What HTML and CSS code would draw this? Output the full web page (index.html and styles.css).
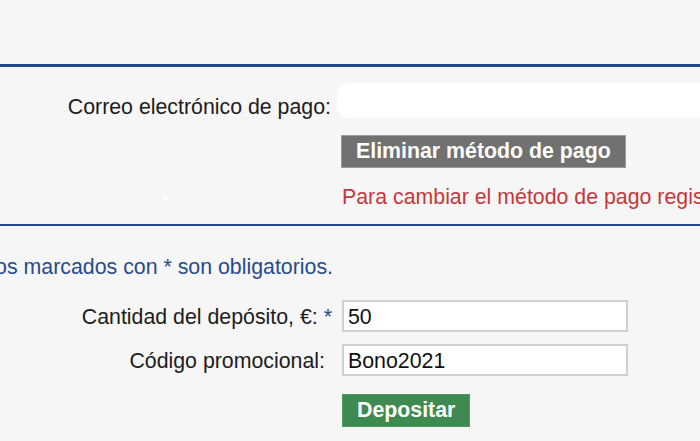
FILE: index.html
```html
<!DOCTYPE html>
<html lang="es">
<head>
<meta charset="utf-8">
<title>Depósito</title>
<link rel="stylesheet" href="styles.css">
</head>
<body>
<div class="page">
  <div class="topbar"></div>
  <section class="payment">
    <div class="row email-row">
      <label class="label">Correo electrónico de pago:</label>
      <div class="email-field"></div>
    </div>
    <div class="row">
      <div></div>
      <div class="actions">
        <button class="btn btn-gray">Eliminar método de pago</button>
        <p class="warning">Para cambiar el método de pago registrado, elimine el actual.</p>
      </div>
    </div>
    <span class="dot"></span>
  </section>
  <section class="deposit">
    <div class="notice"><span>Los campos marcados con * son obligatorios.</span></div>
    <form class="form">
      <label class="label">Cantidad del depósito, €: <span class="req">*</span></label>
      <input class="field" type="text" value="50">
      <label class="label label-pad">Código promocional:</label>
      <input class="field" type="text" value="Bono2021">
      <div></div>
      <div><button type="button" class="btn btn-green">Depositar</button></div>
    </form>
  </section>
</div>
</body>
</html>
```

FILE: styles.css
```css
html, body {
  margin: 0;
  padding: 0;
}
body {
  background: #f6f6f6;
  font-family: "Liberation Sans", Arial, sans-serif;
  font-size: 21.33px;
  color: #1c1c1c;
  overflow: hidden;
  width: 700px;
  height: 441px;
}
.page {
  width: 700px;
}
.topbar {
  height: 64px;
}
.payment {
  position: relative;
  border-top: 3px solid #234a88;
  border-bottom: 2px solid #234a88;
  padding: 16px 0 15px;
}
.row {
  display: grid;
  grid-template-columns: 337px 1fr;
  align-items: start;
}
.label {
  text-align: right;
  line-height: 24px;
  white-space: nowrap;
}
.email-row .label {
  padding-right: 6px;
  padding-top: 12px;
}
.email-field {
  height: 35px;
  width: 420px;
  background: #ffffff;
  border-radius: 12px;
}
.actions {
  padding-top: 16px;
  padding-left: 4px;
}
.btn {
  font-family: "Liberation Sans", Arial, sans-serif;
  font-size: 21.33px;
  font-weight: bold;
  color: #ffffff;
  height: 33px;
  line-height: 31px;
  padding: 0 14px;
  margin: 0;
  border-radius: 0;
  display: block;
  cursor: pointer;
}
.btn-gray {
  background: #717171;
  border: 1px solid #9b9b9b;
}
.btn-green {
  background: #3e8a50;
  border: 1px solid #4f9a60;
}
.warning {
  margin: 17px 0 0 1px;
  line-height: 24px;
  color: #c8363a;
  white-space: nowrap;
}
.dot {
  position: absolute;
  left: 163px;
  top: 128px;
  width: 5px;
  height: 5px;
  border-radius: 50%;
  background: #ffffff;
}
.deposit {
  padding-top: 29px;
}
.notice {
  display: flex;
  justify-content: flex-end;
  width: 333px;
  white-space: nowrap;
  color: #264c8c;
  line-height: 24px;
}
.form {
  margin-top: 21px;
  display: grid;
  grid-template-columns: 332px 286px;
  column-gap: 10px;
  row-gap: 12px;
  align-items: center;
}
.form .label {
  padding-top: 2px;
}
.req {
  color: #264c8c;
}
.label-pad {
  padding-right: 7px;
}
.field {
  box-sizing: border-box;
  width: 286px;
  height: 32px;
  margin: 0;
  border: 2px solid #d0d0d0;
  background: #ffffff;
  padding: 2px 4px 0;
  font-family: "Liberation Sans", Arial, sans-serif;
  font-size: 21.33px;
  color: #111111;
  outline: none;
}
.form .btn-green {
  margin-top: 6px;
}
```
